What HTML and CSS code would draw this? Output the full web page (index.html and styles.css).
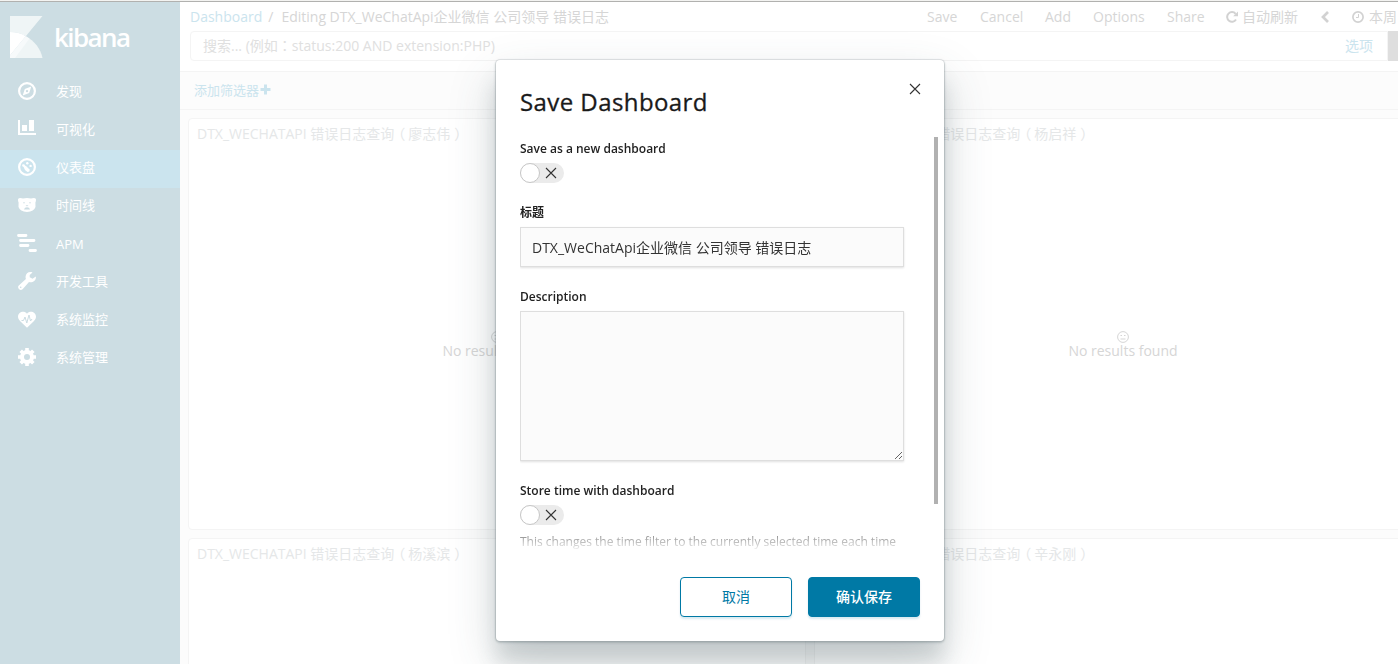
FILE: index.html
```html
<!DOCTYPE html>
<html lang="zh-CN">
<head>
<meta charset="utf-8">
<title>Kibana</title>
<link rel="stylesheet" href="styles.css">
</head>
<body>
<div class="app">
  <nav class="sidebar">
    <div class="brand">
      <svg class="brand-mark" width="33" height="42" viewBox="0 0 33 42">
        <path d="M0 0H32.500L15.800 20.300C11 17.200 6 16 0 16Z" fill="#eff5f6"/>
        <path d="M0 16C6 16 11 17.200 15.800 20.300L0 39.500Z" fill="#fff"/>
        <path d="M15.800 20.300C24.500 25 30.500 32.500 32.500 42H0V39.500Z" fill="#eff5f6"/>
        <path d="M15.800 20.300L19.500 22.500L5 42H0V39.500Z" fill="#f7fafb"/>
      </svg>
      <span class="brand-name">kibana</span>
    </div>
    <a class="nav-item">
      <svg width="18" height="18" viewBox="0 0 18 18"><circle cx="9" cy="9" r="7.900" fill="none" stroke="#fff" stroke-width="2.200"/><path d="M13.300 4.400L11.200 11L4.700 13.600L6.800 7Z" fill="#fff"/><circle cx="9" cy="9.100" r="1.200" fill="#ccdde3"/></svg>
      <span>发现</span></a>
    <a class="nav-item">
      <svg class="icon-chart" width="18" height="18" viewBox="0 0 18 18"><path d="M0 1h2v13h16v2H0zM4 6h5v6H4zM11 1h5v11h-5z" fill="#fff"/></svg>
      <span>可视化</span></a>
    <a class="nav-item active">
      <svg width="18" height="18" viewBox="0 0 18 18"><circle cx="9" cy="9" r="7.900" fill="none" stroke="#fff" stroke-width="2.200"/><path d="M4.500 6.500L8 8L11.500 11.500Q12 14 9.500 14L7 12Z" fill="#fff"/><circle cx="9.300" cy="5.300" r="1.200" fill="#fff"/><circle cx="12.600" cy="7.900" r="1.200" fill="#fff"/><circle cx="5.500" cy="7.500" r="1.300" fill="#fff"/></svg>
      <span>仪表盘</span></a>
    <a class="nav-item">
      <svg width="18" height="18" viewBox="0 0 18 18"><path d="M0 3.500Q0 2 2 2Q4 2 5 2.500Q9 1.300 13 2.500Q14 2 16 2Q18 2 18 3.500Q18 5.500 17.400 6.500L17.500 11Q16 15.500 9 16Q2 15.500 .5 11L.6 6.500Q0 5.500 0 3.500Z" fill="#fff"/><circle cx="6" cy="6.800" r=".7" fill="#ccdde3"/><circle cx="12" cy="6.800" r=".7" fill="#ccdde3"/><path d="M7.500 9.200H10.500L9 10.500ZM6 13.500Q6.500 11.200 9 11.200Q11.500 11.200 12 13.500Z" fill="#ccdde3"/></svg>
      <span>时间线</span></a>
    <a class="nav-item">
      <svg class="icon-apm" width="20" height="18" viewBox="0 0 20 18"><path d="M1.500 1.500H9M3.500 6.500H17M3.500 11.500H11M13 16.500H18.500" fill="none" stroke="#fff" stroke-width="2.800" stroke-linecap="round"/></svg>
      <span class="latin">APM</span></a>
    <a class="nav-item">
      <svg width="18" height="18" viewBox="0 0 18 18"><path d="M17.800 4.500L14.500 6.800L11.700 5.300V2.900L14.500.5C11 -.8 7.700 1.300 7.500 5Q7.600 6 7.900 6.900L.8 13.400C-.3 14.600 0 16 .9 17C2 18.200 3.500 18.200 4.600 17.200L11 10.100C14.500 11.100 18.600 8.500 17.800 4.500Z" fill="#fff"/><circle cx="2.700" cy="15.300" r=".8" fill="#ccdde3"/></svg>
      <span>开发工具</span></a>
    <a class="nav-item">
      <svg width="18" height="18" viewBox="0 0 18 18"><path d="M9 3.700C6.500.3.2 1.300 0 6.800C0 9 1.500 10.500 2.500 11.500L9 17.700L15.500 11.500C16.500 10.500 18 9 18 6.800C17.800 1.300 11.500.3 9 3.700Z" fill="#fff"/><path d="M3.500 10.500H5.500L7 7L8.800 13L11 5L12.500 11L14 9" fill="none" stroke="#ccdde3" stroke-width="1"/></svg>
      <span>系统监控</span></a>
    <a class="nav-item">
      <svg width="18" height="18" viewBox="0 0 18 18"><circle cx="9" cy="9" r="5" fill="none" stroke="#fff" stroke-width="4"/><path d="M9 0V3M9 15V18M0 9H3M15 9H18M2.700 2.700L4.700 4.700M13.300 13.300L15.300 15.300M2.700 15.300L4.700 13.300M13.300 4.700L15.300 2.700" stroke="#fff" stroke-width="3.600"/></svg>
      <span>系统管理</span></a>
  </nav>

  <main class="content">
    <header class="topbar">
      <div class="crumbs"><a>Dashboard</a><i>/</i><span>Editing DTX_WeChatApi企业微信 公司领导 错误日志</span></div>
      <div class="menu">
        <span class="m-save">Save</span><span class="m-cancel">Cancel</span><span class="m-add">Add</span><span class="m-options">Options</span><span class="m-share">Share</span>
        <span class="m-refresh"><svg width="12" height="12" viewBox="0 0 12 12"><path d="M10 8.500A4.800 4.800 0 1 1 9.600 2.800" fill="none" stroke="#d2d2d2" stroke-width="2"/><path d="M12 .5V5.300H7.200Z" fill="#d2d2d2"/></svg>自动刷新</span>
        <span class="m-prev"><svg width="10" height="12" viewBox="0 0 10 12"><path d="M8 1L3 6L8 11" fill="none" stroke="#d2d2d2" stroke-width="2.700"/></svg></span>
        <span class="m-range"><svg width="12" height="12" viewBox="0 0 12 12"><circle cx="6" cy="6" r="5.100" fill="none" stroke="#d2d2d2" stroke-width="1.700"/><path d="M6.500 3V6.500H4" fill="none" stroke="#d2d2d2"/></svg>本周</span>
      </div>
    </header>
    <div class="search-row">
      <div class="search"><span>搜索... (例如<b lang="zh-TW">：</b>status:200 AND extension:PHP)</span><a>选项</a></div>
      <div class="search-button"></div>
    </div>
    <div class="filters"><span>添加筛选器</span><svg width="11" height="11" viewBox="0 0 11 11"><path d="M5.500 .5V10.500M.5 5.500H10.500" stroke="#cbe4ee" stroke-width="3"/></svg></div>
    <div class="panels">
      <section class="panel">
        <h2>DTX_WECHATAPI 错误日志查询<b class="open">（</b>廖志伟<b class="shut">）</b></h2>
        <div class="empty"><svg width="12" height="12" viewBox="0 0 12 12"><circle cx="6" cy="6" r="5.400" fill="none" stroke="#d5d5d5"/><path d="M3.500 4.500H5M7 4.500H8.500M3.500 8H8.500" stroke="#d5d5d5" stroke-width="1.200"/></svg><span>No results found</span></div>
      </section>
      <section class="panel">
        <h2>DTX_WECHATAPI 错误日志查询<b class="open">（</b>杨启祥<b class="shut">）</b></h2>
        <div class="empty"><svg width="12" height="12" viewBox="0 0 12 12"><circle cx="6" cy="6" r="5.400" fill="none" stroke="#d5d5d5"/><path d="M3.500 4.500H5M7 4.500H8.500M3.500 8H8.500" stroke="#d5d5d5" stroke-width="1.200"/></svg><span>No results found</span></div>
      </section>
      <section class="panel"><h2>DTX_WECHATAPI 错误日志查询<b class="open">（</b>杨溪滨<b class="shut">）</b></h2></section>
      <section class="panel"><h2>DTX_WECHATAPI 错误日志查询<b class="open">（</b>辛永刚<b class="shut">）</b></h2></section>
    </div>
  </main>
</div>

<div class="modal" role="dialog">
  <svg class="close" width="12" height="12" viewBox="0 0 12 12"><path d="M1 1L11 11M11 1L1 11" stroke="#333" stroke-width="1.100"/></svg>
  <h1>Save Dashboard</h1>
  <div class="modal-body">
    <label class="first">Save as a new dashboard</label>
    <div class="switch"><i></i><svg width="12" height="12" viewBox="0 0 12 12"><path d="M1 1L11 11M11 1L1 11" stroke="#333" stroke-width="1.100"/></svg></div>
    <label class="title-label">标题</label>
    <input type="text" value="DTX_WeChatApi企业微信 公司领导 错误日志">
    <label class="desc-label">Description</label>
    <textarea></textarea>
    <label class="time-label">Store time with dashboard</label>
    <div class="switch"><i></i><svg width="12" height="12" viewBox="0 0 12 12"><path d="M1 1L11 11M11 1L1 11" stroke="#333" stroke-width="1.100"/></svg></div>
    <p class="help">This changes the time filter to the currently selected time each time</p>
  </div>
  <div class="scroll-thumb"></div>
  <footer><button class="cancel">取消</button><button class="confirm">确认保存</button></footer>
</div>
</body>
</html>
```

FILE: styles.css
```css
* { box-sizing: border-box; }
html, body { height: 100%; }
body {
  margin: 0;
  overflow: hidden;
  position: relative;
  font: 14px/20px "Open Sans", "Noto Sans CJK SC", sans-serif;
  color: #d6d6d6;
  background: #fff;
}
svg { display: block; flex: none; }
b { display: inline-block; font-family: "Noto Sans CJK TC", sans-serif; font-weight: 400; line-height: 1; }
.open { transform: translateX(-3px); }
.shut { transform: translateX(4px); }
.app { display: flex; height: 664px; border-top: 1px solid #f3f3f1; box-shadow: inset 0 1px #b1b1af; padding-top: 1px; overflow: hidden; }

.sidebar { flex: none; width: 180px; background: #ccdde3; color: #fff; }
.brand { display: flex; height: 72px; padding: 14px 0 0 10px; }
.brand-name { margin: 3px 0 0 11px; font: 600 26px/36px "Open Sans", sans-serif; letter-spacing: -1.600px; }
.nav-item { display: flex; align-items: center; height: 38px; padding: 0 0 4px 18px; font-size: 13px; }
.nav-item svg { width: 18px; margin-right: 20px; }
.nav-item .latin { position: relative; top: 1px; }
.nav-item .icon-apm { width: 20px; margin: 0 19px 0 -1px; }
.nav-item .icon-chart { position: relative; top: -1px; }
.active { background: #cbe4ee; }

.content { flex: none; width: 1262px; background: #fcfcfc; }
.topbar { display: flex; width: 1218px; height: 29px; padding: 5px 0 0 10px; background: #fff; white-space: nowrap; }
.crumbs { flex: 1; }
.crumbs a { color: #cbe4ee; }
.crumbs i { font-style: normal; margin: 0 8px 0 6px; }
.menu { display: flex; flex: none; width: 471px; overflow: hidden; }
.menu span { display: flex; flex: none; align-items: center; height: 20px; }
.m-save { width: 53px; }
.m-cancel { width: 65px; }
.m-add { width: 48px; }
.m-options { width: 74px; }
.m-share { width: 59px; }
.m-refresh { width: 94px; gap: 4px; }
.m-prev { width: 32px; }
.m-range { gap: 5px; }
.search-row { display: flex; width: 1218px; height: 40px; padding: 0 0 10px 10px; background: #fff; }
.search { display: flex; justify-content: space-between; flex: 1; padding: 4px 14px 0 12px; border: 1px solid #f4f4f4; border-radius: 4px 0 0 4px; line-height: 20px; color: #e0e0e0; }
.search a { color: #cbe4ee; }
.search-button { width: 10px; height: 30px; background: #dedede; }
.filters { display: flex; align-items: center; gap: 1px; height: 39px; padding: 0 0 2px 14px; border: solid #f4f4f4; border-width: 1px 0; font-size: 13px; color: #cbe4ee; }
.panels { display: grid; grid-template-columns: 618px 618px; grid-template-rows: 412px 412px; gap: 8px; padding: 8px 0 0 8px; }
.panel { display: flex; flex-direction: column; background: #fff; border: 1px solid #f4f4f4; border-radius: 4px; }
.panel h2 { flex: none; height: 26px; margin: 0; padding: 5px 0 0 8px; font: inherit; font-size: 14px; color: #e5e7e8; }
.empty { display: flex; flex: 1; flex-direction: column; align-items: center; justify-content: center; padding-top: 17px; }
.empty span { margin-top: -2px; line-height: 20px; }

.modal {
  position: absolute; left: 496px; top: 60px; width: 448px; height: 581px;
  padding: 26px 24px 24px;
  background: #fff; color: #222; border-radius: 4px;
  box-shadow: 0 0 0 1px rgba(120,130,133,.150), 0 1px 2px 1px rgba(60,80,85,.220), 0 22px 20px rgba(60,80,88,.160), 0 20px 48px rgba(60,80,88,.220);
}
.close { position: absolute; top: 23px; right: 23px; }
.modal h1 { margin: 0; height: 51px; font: 500 24px/32px "Open Sans", sans-serif; letter-spacing: .420px; -webkit-text-stroke: .300px #1a1a1a; color: #1a1a1a; }
.modal-body { height: 415px; overflow: hidden; -webkit-mask-image: linear-gradient(#000 0, #000 392px, transparent 415px); mask-image: linear-gradient(#000 0, #000 392px, transparent 415px); }
.modal label { display: block; height: 18px; font-size: 12px; line-height: 18px; font-weight: 600; }
.modal .first { padding-top: 3px; height: 26px; }
.switch { display: flex; align-items: center; width: 44px; height: 20px; border-radius: 10px; background: #ebebeb; }
.switch i { width: 20px; height: 20px; margin-right: 5px; border: 1px solid #c6c6c6; border-radius: 50%; background: #fff; }
.modal .title-label { margin-top: 21px; height: 23px; }
.modal input, .modal textarea { display: block; width: 384px; border: 1px solid #dedede; border-radius: 0; background: #fbfbfb; box-shadow: 0 1px 2px rgba(0,0,0,.120); font: inherit; color: #333; outline: none; }
.modal input { height: 40px; padding: 0 11px 1px; }
.modal .desc-label { margin-top: 21px; height: 23px; }
.modal textarea { height: 150px; padding: 12px; }
.modal .time-label { margin-top: 21px; height: 23px; }
.help { margin: 8px 0 0; font-size: 12px; line-height: 18px; color: #666; white-space: nowrap; }
.scroll-thumb { position: absolute; left: 438px; top: 77px; width: 4px; height: 367px; background: #b1b1b1; }
footer { display: flex; justify-content: flex-end; gap: 16px; padding-top: 25px; }
button { width: 112px; height: 40px; padding: 0; border: 1px solid #0079a5; border-radius: 4px; font: inherit; box-shadow: 0 2px 2px rgba(0,121,165,.150); }
.cancel { background: #fff; color: #0079a5; }
.confirm { background: #0079a5; color: #fff; font-weight: 500; }
```
